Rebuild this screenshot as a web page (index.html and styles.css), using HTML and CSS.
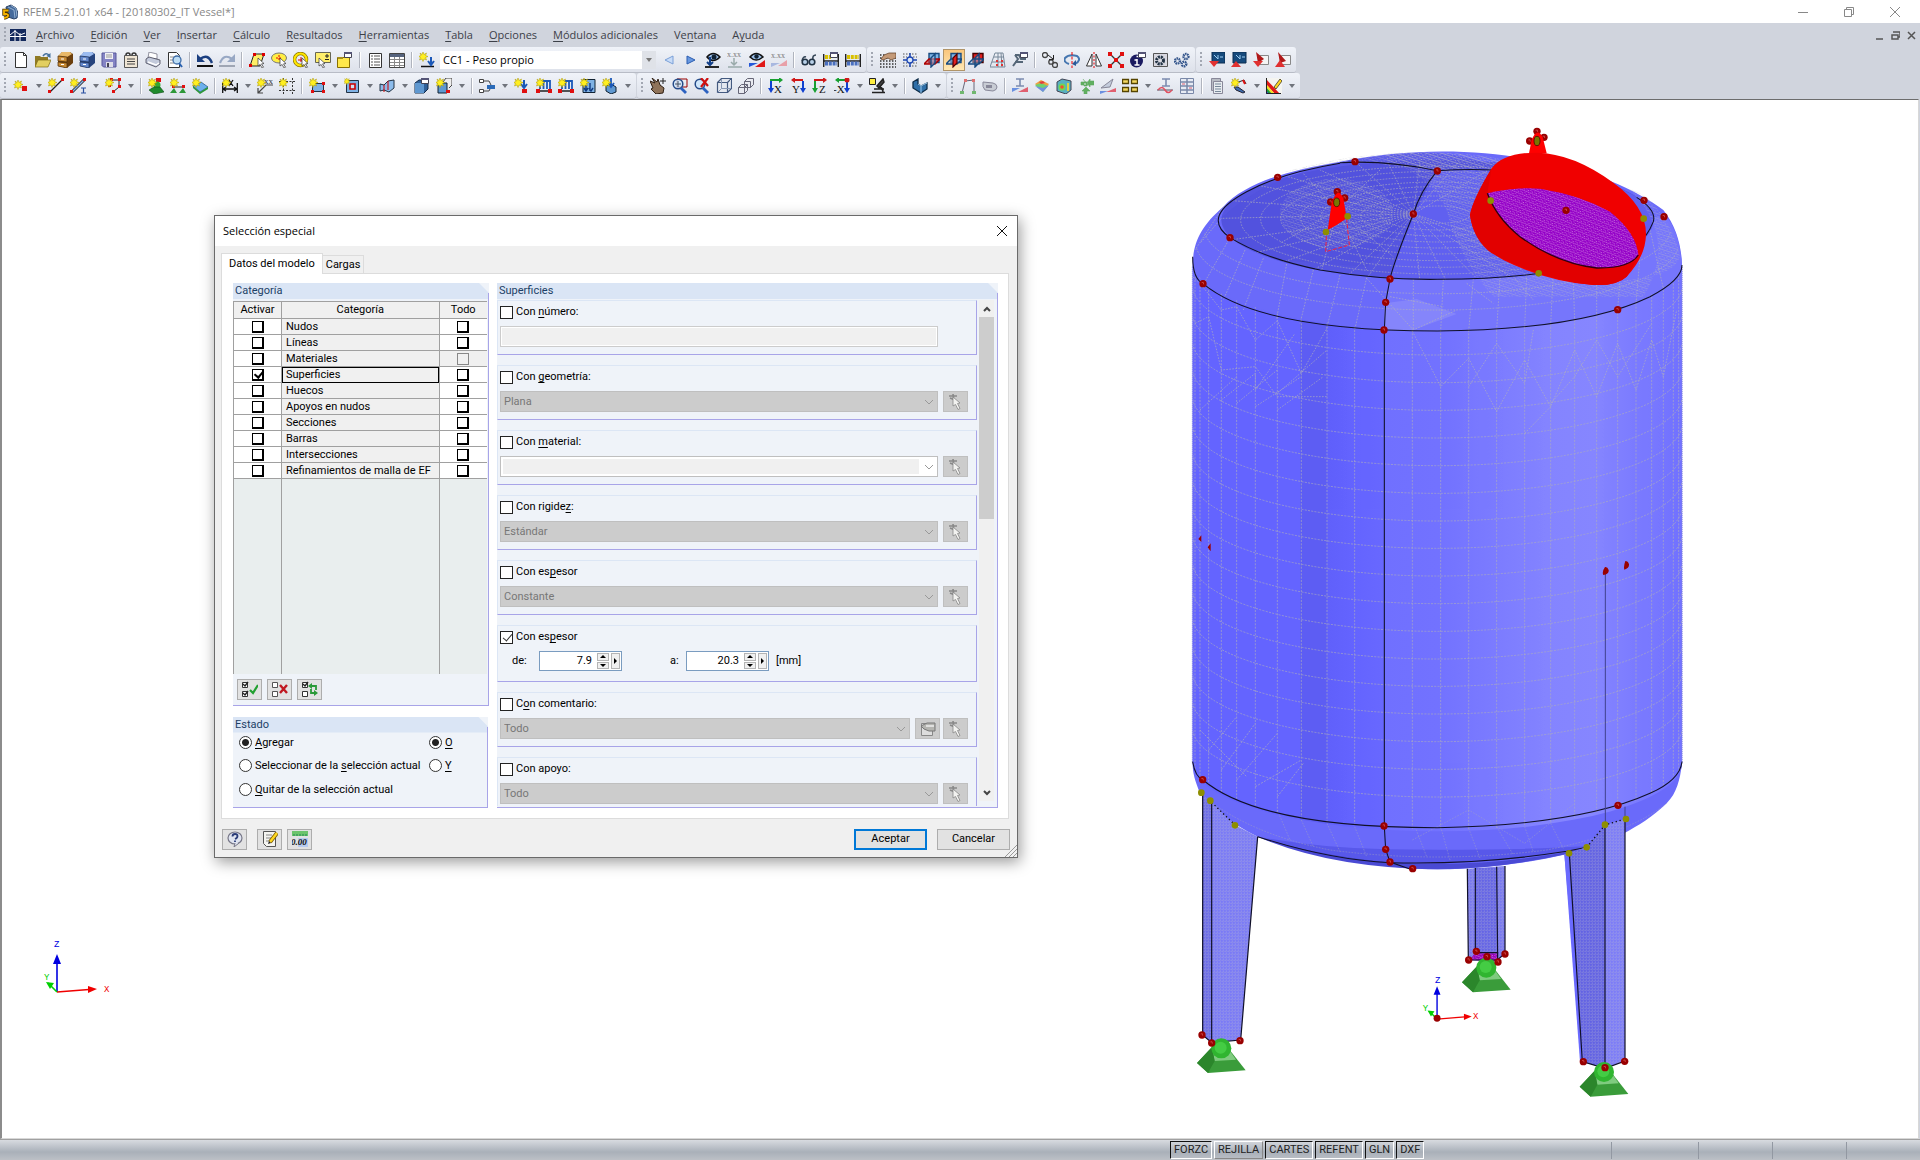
FILE: index.html
```html
<!DOCTYPE html>
<html lang="es">
<head>
<meta charset="utf-8">
<title>RFEM 5.21.01 x64</title>
<link rel="stylesheet" href="styles.css">
</head>
<body>
<svg class="defs" aria-hidden="true">
<defs>
<linearGradient id="g-shell" x1="0" x2="1"><stop offset="0" stop-color="#6464ff"/><stop offset=".22" stop-color="#6464ff"/><stop offset=".22" stop-color="#5d5df3"/><stop offset=".274" stop-color="#5d5df3"/><stop offset=".274" stop-color="#6060fb"/><stop offset=".332" stop-color="#6464ff"/><stop offset=".391" stop-color="#6868ff"/><stop offset=".391" stop-color="#7070ff"/><stop offset=".5" stop-color="#7272ff"/><stop offset=".6" stop-color="#7a7aff"/><stop offset=".72" stop-color="#8484ff"/><stop offset=".82" stop-color="#8686ff"/><stop offset=".9" stop-color="#7c7cff"/><stop offset="1" stop-color="#7272ff"/></linearGradient>
<pattern id="p-mesh" width="9" height="9" patternUnits="userSpaceOnUse"><path d="M0 4H9M4 0V9" stroke="#c0c0cc" stroke-width="1.6" stroke-dasharray="4 3" fill="none"/></pattern>
<pattern id="p-fine" width="14" height="14" patternUnits="userSpaceOnUse" patternTransform="rotate(18)"><path d="M0 7H14M7 0L0 14M7 0L14 14" stroke="#c0c0c4" stroke-width="1.8" stroke-dasharray="3 3" fill="none"/></pattern>
<pattern id="p-pink" width="13" height="13" patternUnits="userSpaceOnUse" patternTransform="rotate(22)"><path d="M0 6H13M6 0L0 13M6 0L13 13" stroke="#d890e4" stroke-width="1.600" stroke-dasharray="3 3" fill="none"/></pattern>
<clipPath id="c-shell"><path d="M38 462A735 210 0 0 0 1506 462V1960A735 210 0 0 1 38 1960Z"/></clipPath>
<clipPath id="c-dome"><ellipse cx="772" cy="330" rx="648" ry="180"/></clipPath>
<g id="node"><circle r="11" fill="#900"/><path d="M-4-3l5-1 1 6" stroke="#c84040" stroke-width="3" fill="none"/></g>
<circle id="mid" r="10" fill="#8e8e00"/>
<g id="support"><path d="M-73 58L-28 10H18L73 80L-40 88Z" fill="#3a9c3a"/><path d="M-28 10H18L44 48L-20 52Z" fill="#7fcb7f"/><path d="M-28 10L-20 52L-40 88L-73 58Z" fill="#2b862b"/><circle cy="14" r="30" fill="#30b530"/><circle cx="-2" cy="12" r="18" fill="#44cc44"/></g>
<g id="triad" fill="none" stroke-width="1.6"><path d="M22 52V20" stroke="#0000e0"/><path d="M22 14l4 10h-8z" fill="#0000e0"/><path d="M22 52L54 49.500" stroke="#f00000"/><path d="M62 49l-9 4v-7z" fill="#f00000"/><path d="M22 52l-9-9" stroke="#00d000"/><path d="M11 42l8 1-4 6z" fill="#00d000"/></g>

<path id="star" d="M4 0l1 2.500 2.500-1.500-1 2.500 2.500 1-2.500 1 1 2.500L5 7 4 9.500 3 7 .5 8l1-2.500L-.5 4.500l2.500-1L1 1l2 1.500z" fill="#ffef20" stroke="#a89400" stroke-width=".5"/>
<g id="win"><path d="M.5.5h7v5h-7z" fill="#fff" stroke="#445"/><path d="M0 0h8v2H0z" fill="#557"/></g>
<path id="cursor" d="M0 0l6 5.500-2.500.4 2 3.300-1.400.8-2-3.500L0 8z" fill="#fff" stroke="#333" stroke-width=".7"/>

<symbol id="app" viewBox="0 0 16 16"><path d="M4 3l5-2 5 3 2 5-1 5-3 1-6-2z" fill="#456a9c" stroke="#2c4468"/><path d="M6 3l6 3 1 8M9 1.500l5 3 1 8" stroke="#a8c4e0" fill="none" stroke-width=".8"/><path d="M6.500 6.500H2V10H4.500q2 .5 1.500 2T2 14" stroke="#4a3400" stroke-width="3.400" fill="none"/><path d="M6.500 6.500H2V10H4.500q2 .5 1.500 2T2 14" stroke="#f5b400" stroke-width="1.800" fill="none"/></symbol>
<symbol id="bridge" viewBox="0 0 16 12"><path d="M0 0h16v12H0z" fill="#13295c"/><path d="M0 7.500h16M5 1v11M10 4v8M0 6L5 2l5 4 5-2" stroke="#fff" fill="none"/></symbol>
<symbol id="new" viewBox="0 0 16 16"><path d="M2.500.5h8l3 3v12h-11z" fill="#fff" stroke="#333"/><path d="M10.500.5v3h3" fill="none" stroke="#333"/></symbol>
<symbol id="open" viewBox="0 0 16 16"><path d="M0 4h5l1 1h7v10H0z" fill="#8f7a24"/><path d="M3 8h13l-3 7H0z" fill="#e2cf60" stroke="#7d6a16" stroke-width=".7"/><path d="M8 4q3-4 6-1" stroke="#46729e" stroke-width="1.600" fill="none"/><path d="M15.500 1v5l-4-2z" fill="#46729e"/></symbol>
<symbol id="cab-o" viewBox="0 0 16 16"><path d="M5 0h8l3 2v9l-6 5-9-2V5z" fill="#6b3f0e"/><path d="M5 0h8l2 2-5 3-9-1z" fill="#e8b868"/><path d="M1 4l9 1v5l-9-1zM1 10l9 1v5l-9-2z" fill="#c98b34" stroke="#4a2c08" stroke-width=".7"/><path d="M4 7h3M4 12.500h3" stroke="#fff"/></symbol>
<symbol id="cab-b" viewBox="0 0 16 16"><path d="M5 0h8l3 2v9l-6 5-9-2V5z" fill="#27447e"/><path d="M5 0h8l2 2-5 3-9-1z" fill="#9cbcf0"/><path d="M1 4l9 1v5l-9-1zM1 10l9 1v5l-9-2z" fill="#6488cc" stroke="#1c3058" stroke-width=".7"/><path d="M4 7h3M4 12.500h3" stroke="#fff"/></symbol>
<symbol id="save" viewBox="0 0 16 16"><path d="M1 1h14v14H2.500L1 13.500z" fill="#8484c4" stroke="#56569a"/><path d="M4 1h8v6H4z" fill="#f0f0f4"/><path d="M5 3h6M5 5h6" stroke="#999"/><path d="M5 10h7v5H5z" fill="#dedee8"/><path d="M6 11h2v4H6z" fill="#445"/></symbol>
<symbol id="clip" viewBox="0 0 16 16"><path d="M1.500 3.500h13v12h-13z" fill="#efe5d4" stroke="#555"/><path d="M3 3q0-2 2-2t2 2M9 3q0-2 2-2t2 2" stroke="#333" stroke-width="1.500" fill="none"/><path d="M4 7h8M4 9.500h8M4 12h8" stroke="#444"/></symbol>
<symbol id="print" viewBox="0 0 16 16"><path d="M4 0l8 2v5L3 6z" fill="#fff" stroke="#667" stroke-width=".7"/><path d="M1 7l3-2 11 3v4l-4 3-10-4z" fill="#c3cadb" stroke="#445" stroke-width=".8"/><path d="M3 10l8 3 3-2" stroke="#fff" stroke-width="1.500" fill="none"/></symbol>
<symbol id="preview" viewBox="0 0 16 16"><path d="M1.500.5h8l3 3v12h-11z" fill="#fff" stroke="#333"/><path d="M3 5h6M3 8h4M3 11h4" stroke="#888"/><circle cx="10" cy="8" r="4" fill="#bcdcf4" stroke="#3f6da8" stroke-width="1.300"/><path d="M12 11l3 4" stroke="#2a62b0" stroke-width="2"/></symbol>
<symbol id="undo" viewBox="0 0 16 16"><path d="M0 14h16" stroke="#111" stroke-width="2"/><path d="M3 7q8-6 12 4" stroke="#1b3f80" stroke-width="2.500" fill="none"/><path d="M0 2v8h8z" fill="#1b3f80"/></symbol>
<symbol id="redo" viewBox="0 0 16 16"><path d="M0 14h16" stroke="#8890a0" stroke-width="1.500"/><path d="M13 7Q5 1 1 11" stroke="#98a8c4" stroke-width="2.200" fill="none"/><path d="M16 2v8H8z" fill="#98a8c4"/></symbol>
<symbol id="sel-r" viewBox="0 0 16 16"><path d="M5 2h10l-4 12H1z" fill="#ffee66" stroke="#222"/><path d="M4 1h3v3H4zM13 1h3v3h-3zM0 12h3v3H0z" fill="#d00"/><use href="#cursor" x="9" y="6"/></symbol>
<symbol id="sel-e" viewBox="0 0 16 16"><ellipse cx="8" cy="6" rx="7.500" ry="5" fill="#ffee44" stroke="#777"/><path d="M8 3v6M5 6h6" stroke="#e00" stroke-dasharray="2 1"/><use href="#cursor" x="9" y="6"/></symbol>
<symbol id="sel-c" viewBox="0 0 16 16"><circle cx="7.500" cy="7.500" r="6" fill="none" stroke="#8a7600" stroke-width="3.500"/><circle cx="7.500" cy="7.500" r="6" fill="none" stroke="#ffe600" stroke-width="2.200"/><path d="M8 5v5M5 8h6" stroke="#d00"/><use href="#cursor" x="9" y="6"/></symbol>
<symbol id="sel-pm" viewBox="0 0 16 16"><path d="M.5.5h15v10H.5z" fill="#ffef6c" stroke="#665"/><path d="M10 4h4M12 2v4M10 7.500h4" stroke="#222"/><use href="#cursor" x="4" y="6"/></symbol>
<symbol id="sel-w" viewBox="0 0 16 16"><path d="M.5 5.500h12v10H.5z" fill="#ffe84a" stroke="#886f00"/><path d="M1 5h5v2H1z" fill="#a89020"/><use href="#win" x="7" y="0"/></symbol>
<symbol id="list" viewBox="0 0 16 16"><path d="M2.500 1.500h12v14h-12z" fill="#fff" stroke="#333"/><path d="M7 4h6M7 7h6M7 10h6M7 13h6M4 4h2M4 7h2M4 10h2M4 13h2" stroke="#555"/></symbol>
<symbol id="grid" viewBox="0 0 16 16"><path d="M.5 1.500h15v14H.5z" fill="#fff" stroke="#444"/><path d="M1 2h14v3H1z" fill="#56647e"/><path d="M1 7.500h14M1 10.500h14M1 13.500h14M5.500 5v10M10.500 5v10" stroke="#888"/></symbol>
<symbol id="newload" viewBox="0 0 16 16"><use href="#star"/><path d="M2 14.500h13" stroke="#111" stroke-width="1.500"/><path d="M12 5v8M9 9l3 4 3-4" stroke="#1b58b8" stroke-width="2" fill="none"/></symbol>
<symbol id="prev" viewBox="0 0 16 16"><path d="M12 4v8L4 8z" fill="#c8dcf8" stroke="#7aa0d8"/></symbol>
<symbol id="next" viewBox="0 0 16 16"><path d="M4 4v8l8-4z" fill="#6898e0" stroke="#2a5cb0"/></symbol>
<symbol id="eye1" viewBox="0 0 16 16"><path d="M2 5q6-7 13 0-7 7-13 0z" fill="#9cc0ea" stroke="#111" stroke-width="1.500"/><circle cx="9" cy="5" r="2.500" fill="#123"/><path d="M5 5v8M2 10l3 3 3-3" stroke="#123f88" stroke-width="2" fill="none"/><path d="M0 15h14" stroke="#111" stroke-width="1.800"/></symbol>
<symbol id="xxx1" viewBox="0 0 16 16"><text x="0" y="5" font-size="8" fill="#777">x.xx</text><path d="M7 6v7M4 10l3 3 3-3M1 15h14" stroke="#9aa" stroke-width="1.500" fill="none"/></symbol>
<symbol id="eye2" viewBox="0 0 16 16"><path d="M1 5q6-7 13 0-7 6-13 0z" fill="#9cc0ea" stroke="#111" stroke-width="1.500"/><circle cx="7.500" cy="4.500" r="2.200" fill="#123"/><path d="M0 11h9l-9 4z" fill="#2458d8"/><path d="M16 8v7H6z" fill="#e01818"/></symbol>
<symbol id="xxx2" viewBox="0 0 16 16"><text x="0" y="6" font-size="8" fill="#777">x.xx</text><path d="M0 11h9l-9 4z" fill="#a8b8e0"/><path d="M16 8v6H7z" fill="#e8a0a8"/></symbol>
<symbol id="glasses" viewBox="0 0 16 16"><path d="M1 9q1-5 4-4M15 3q-4 0-3 5" stroke="#345" stroke-width="1.500" fill="none"/><circle cx="4" cy="10" r="2.800" fill="#b8d0e8" stroke="#234" stroke-width="1.600"/><circle cx="11" cy="10" r="2.800" fill="#b8d0e8" stroke="#234" stroke-width="1.600"/></symbol>
<symbol id="abacus" viewBox="0 0 16 16"><path d="M.7 2v13M15.300 2v13M0 9h16" stroke="#222" stroke-width="1.400"/><path d="M2 5h12" stroke="#d8c000" stroke-width="4" stroke-dasharray="3 .8"/><path d="M2 11.500h12" stroke="#4a70c0" stroke-width="4" stroke-dasharray="3 .8"/></symbol>
<symbol id="abacus-w" viewBox="0 0 16 16"><path d="M.7 2v13M15.300 2v13M0 9h16" stroke="#222" stroke-width="1.400"/><path d="M2 5h6" stroke="#d8c000" stroke-width="4" stroke-dasharray="3 .8"/><path d="M2 11.500h12" stroke="#4a70c0" stroke-width="4" stroke-dasharray="3 .8"/><use href="#win" x="7" y="0"/></symbol>
<symbol id="handgrid" viewBox="0 0 16 16"><path d="M0 3h5M0 6h16M0 9h16M0 12h16M0 15h16" stroke="#333" stroke-dasharray="1.500 1.500" stroke-width="1.300"/><path d="M4 3l5-2h7v5l-5 2-3-2-5 2-2-1z" fill="#c49a78" stroke="#5c3a20" stroke-width=".7"/></symbol>
<symbol id="snap" viewBox="0 0 16 16"><path d="M1 2h14M1 14h14M1 5h4M11 5h4M1 11h4M11 11h4" stroke="#555" stroke-dasharray="1.500 1.500"/><circle cx="8" cy="8" r="3" fill="#dce8fa" stroke="#1a44b0" stroke-width="1.300"/><path d="M8 1v4M8 11v4M1 8h4M11 8h4" stroke="#1a44b0" stroke-width="1.500"/></symbol>
<symbol id="pl1" viewBox="0 0 16 16"><path d="M5 1.500h10v9H5z" fill="#7eb4e6" stroke="#174a80" stroke-width="1.400"/><path d="M0 12l5-5h11l-5 5z" fill="#e02020" fill-opacity=".6" stroke="#a00" stroke-width="1.400"/><path d="M7 6l4-4v9l-4 4z" fill="#9cc8f0" fill-opacity=".5" stroke="#174a80" stroke-width="1.400"/></symbol>
<symbol id="pl2" viewBox="0 0 16 16"><path d="M5 1.500h10v9H5z" fill="#7eb4e6" stroke="#174a80" stroke-width="1.400"/><path d="M0 12l5-5h11l-5 5z" fill="#9cc8f0" fill-opacity=".5" stroke="#174a80" stroke-width="1.400"/><path d="M7 6l4-4v9l-4 4z" fill="#e02020" stroke="#500" stroke-width="1.200"/></symbol>
<symbol id="pl3" viewBox="0 0 16 16"><path d="M5 1.500h10v9H5z" fill="#e02020" stroke="#400" stroke-width="1.400"/><path d="M0 12l5-5h11l-5 5zM7 6l4-4v9l-4 4z" fill="#9cc8f0" fill-opacity=".5" stroke="#174a80" stroke-width="1.400"/></symbol>
<symbol id="persp" viewBox="0 0 16 16"><path d="M5 1h8l2 14H0zM4 5h10M2 10h12M8 1v14M11 1l1 14" stroke="#789" fill="none"/><path d="M6 8h2v2H6zM11 8h2v2h-2zM6 12h2v2H6zM11 12h2v2h-2z" fill="#d33"/></symbol>
<symbol id="wrench" viewBox="0 0 16 16"><path d="M1 14l5-7-3-4M3 3h4l2 4h5M3 10h8" stroke="#567" stroke-width="2" fill="none"/><use href="#win" x="8" y="0"/></symbol>
<symbol id="move" viewBox="0 0 16 16"><circle cx="3" cy="3" r="2.500" fill="none" stroke="#444" stroke-width="1.300"/><circle cx="9" cy="10" r="2.200" fill="none" stroke="#444" stroke-width="1.300"/><circle cx="13" cy="13" r="2.500" fill="none" stroke="#444" stroke-width="1.300"/><path d="M6 3l5 4M11.500 3v4.500H7" stroke="#222" fill="none"/></symbol>
<symbol id="rotate" viewBox="0 0 16 16"><path d="M5 12Q-1 10 1 6q4-4 12-2 5 4-2 8" stroke="#4576b0" stroke-width="2" fill="none"/><path d="M12 8v6l-4-2z" fill="#2a5a98"/><path d="M8 0v16" stroke="#e00" stroke-dasharray="3 1.500"/></symbol>
<symbol id="mirror" viewBox="0 0 16 16"><path d="M6 2v12H.5zM10 2v12h5.500z" fill="#fff" stroke="#333"/><path d="M8 0v16" stroke="#e00" stroke-dasharray="2 1.500"/></symbol>
<symbol id="cross" viewBox="0 0 16 16"><path d="M2 2l12 12M14 2L2 14" stroke="#333" stroke-width="1.400"/><path d="M0 0h4v4H0zM12 0h4v4h-4zM0 12h4v4H0zM12 12h4v4h-4zM6 6h4v4H6z" fill="#e01010"/></symbol>
<symbol id="info" viewBox="0 0 16 16"><circle cx="6.500" cy="9" r="6.500" fill="#1a1a60"/><path d="M7 7v6M4.500 8h2M4.500 13h5M6.500 4.500h1.500" stroke="#fff" stroke-width="1.500"/><use href="#win" x="8" y="0"/></symbol>
<symbol id="gearbox" viewBox="0 0 16 16"><path d="M1.500 1.500h14v13h-14z" fill="#d8d8e0" stroke="#555"/><circle cx="8" cy="8.500" r="3.500" fill="none" stroke="#234" stroke-width="3" stroke-dasharray="2 .8"/></symbol>
<symbol id="gears" viewBox="0 0 16 16"><g fill="none" stroke="#35568c" stroke-width="2.400" stroke-dasharray="1.500 .6"><circle cx="3.500" cy="9" r="2.500"/><circle cx="12" cy="4.500" r="2.500"/><circle cx="10" cy="12" r="2.300"/></g></symbol>
<symbol id="m1" viewBox="0 0 16 16"><path d="M3 0h13v11H3z" fill="#164a7c" stroke="#0b2d50"/><path d="M5 3l4 4M9 3v4M11 5h3" stroke="#9fd0f4"/><path d="M0 9h10l-5 6z" fill="#e03030"/></symbol>
<symbol id="m2" viewBox="0 0 16 16"><path d="M2 0h13v11H2z" fill="#164a7c" stroke="#0b2d50"/><path d="M5 3l4 4M9 3v4M11 5h3" stroke="#9fd0f4"/><path d="M0 15h10L5 9z" fill="#e03030"/></symbol>
<symbol id="m3" viewBox="0 0 16 16"><path d="M6.500 3.500h9v9h-9z" fill="#f4f4f4" stroke="#888"/><path d="M3 0l8 7-6 4z" fill="#b01818"/><path d="M0 9h10l-5 6z" fill="#e03030"/></symbol>
<symbol id="m4" viewBox="0 0 16 16"><path d="M6.500 3.500h9v9h-9z" fill="#f4f4f4" stroke="#888"/><path d="M3 0l8 9-6 2z" fill="#b01818"/><path d="M0 15h10L5 8z" fill="#e03030"/></symbol>

<symbol id="node-n" viewBox="0 0 16 16"><use href="#star" x="1" y="2"/><path d="M9 8h5v5H9z" fill="#e01010"/></symbol>
<symbol id="line-n" viewBox="0 0 16 16"><path d="M2 14L14 2" stroke="#222" stroke-width="1.300"/><path d="M0 12h3v3H0zM13 0h3v3h-3z" fill="#e01010"/><use href="#star"/></symbol>
<symbol id="member-n" viewBox="0 0 16 16"><path d="M2 14L14 2" stroke="#222" stroke-width="3"/><path d="M2 14L14 2" stroke="#8ab4e8" stroke-width="1.500"/><path d="M0 12h3v3H0zM13 0h3v3h-3z" fill="#e01010"/><path d="M11 10h5M11 15h5M13.500 10v5" stroke="#2a50a0" stroke-width="1.200"/><use href="#star"/></symbol>
<symbol id="poly-n" viewBox="0 0 16 16"><path d="M6 2h8v7l-6 5" stroke="#222" fill="none"/><path d="M5 0h3v3H5zM13 0h3v3h-3zM13 7h3v3h-3zM7 12h3v3H7zM3 6h3v3H3z" fill="#e01010"/><use href="#star"/></symbol>
<symbol id="sup-n" viewBox="0 0 16 16"><path d="M8 0h5v4H8z" fill="#e01010"/><circle cx="9" cy="7" r="3.500" fill="#3a3"/><path d="M6 9h6l4 5-10 2-5-4z" fill="#1f8a2c" stroke="#0c4c14" stroke-width=".6"/><use href="#star"/></symbol>
<symbol id="sups-n" viewBox="0 0 16 16"><path d="M3 9h11" stroke="#222"/><path d="M2 7h3v3H2zM12 7h3v3h-3z" fill="#e01010"/><path d="M4 10l3 5H0zM13 10l3 5H9z" fill="#2c9838"/><use href="#star"/></symbol>
<symbol id="surfsup-n" viewBox="0 0 16 16"><path d="M1 8l8-4 7 5-8 5z" fill="#6cb0ec" stroke="#1c5080" stroke-width=".7"/><path d="M1 8l7 6 8-5v2l-8 5-7-6z" fill="#2c9838"/><use href="#star"/></symbol>
<symbol id="dim-n" viewBox="0 0 16 16"><path d="M.7 5v10M15.300 5v10M1 11h14M4 9l-3 2 3 2M12 9l3 2-3 2M7 2l4 6M11 2L7 8" stroke="#111" fill="none" stroke-width="1.300"/><use href="#star"/></symbol>
<symbol id="note-n" viewBox="0 0 16 16"><text x="7" y="6" font-size="9" fill="#333">xx</text><path d="M16 7H9l-8 8M1 10v5h5" stroke="#444" fill="none" stroke-width="1.200"/><use href="#star"/></symbol>
<symbol id="guide-n" viewBox="0 0 16 16"><path d="M4.500 0v16M13.500 0v16M0 3.500h16M0 12.500h16" stroke="#333" stroke-dasharray="2 1.500"/><use href="#star"/></symbol>
<symbol id="surf-n" viewBox="0 0 16 16"><path d="M3.500 5.500h11v8h-11z" fill="#7fb2e4" stroke="#234"/><path d="M2 12h3v3H2zM13 12h3v3h-3zM13 4h3v3h-3z" fill="#e01010"/><use href="#star"/></symbol>
<symbol id="opening-n" viewBox="0 0 16 16"><path d="M2.500 2.500h12v12h-12z" fill="#7fb2e4" stroke="#234"/><path d="M6 6h5v5H6z" fill="#cfe0f4" stroke="#c00" stroke-width="1.600"/><use href="#star" transform="scale(.7)"/></symbol>
<symbol id="fold" viewBox="0 0 16 16"><path d="M1 6l4 1 4-4 6-1v8l-5 4-5-2-4 1z" fill="#8cbcec" stroke="#234"/><path d="M5 7v7M9 3v9" stroke="#c00"/></symbol>
<symbol id="solid" viewBox="0 0 16 16"><path d="M1 5l4-3h9v9l-4 4H1z" fill="#2f6098" stroke="#122a48"/><path d="M1 5h9v10H1z" fill="#5f98d0"/><use href="#win" x="7" y="0"/></symbol>
<symbol id="extr-n" viewBox="0 0 16 16"><path d="M7 4l3-4h6v7l-3 3" fill="#eee" stroke="#444"/><path d="M2 5h9v10H2z" fill="#5f98d0" stroke="#123"/><path d="M10 12h4v3h-4z" fill="#e01010"/><use href="#star"/></symbol>
<symbol id="tree" viewBox="0 0 16 16"><path d="M.5 1.500h4v3h-4zM.5 11.500h4v3h-4z" fill="#fff" stroke="#444"/><path d="M5 3h5l2 4M5 13h5l2-4" stroke="#444" fill="none"/><path d="M8 7h8v4H8z" fill="#2a6ab8"/></symbol>
<symbol id="nload" viewBox="0 0 16 16"><path d="M10 2v7M7 6l3 4 3-4" stroke="#1b58b8" stroke-width="2" fill="none"/><path d="M8 11h5v4H8z" fill="#e01010"/><use href="#star"/></symbol>
<symbol id="lload" viewBox="0 0 16 16"><path d="M3 3h11v8M4 3v8M7.500 3v8M11 3v8" stroke="#1b58b8" stroke-width="1.800" fill="none"/><path d="M1 13h14" stroke="#222" stroke-width="1.500"/><path d="M0 11h4v4H0zM12 11h4v4h-4z" fill="#e01010"/><use href="#star"/></symbol>
<symbol id="sload" viewBox="0 0 16 16"><path d="M3 1.500h12v13H3z" fill="#7fb2e4" stroke="#123"/><path d="M6 5v8M10 5v8M4 10l2 3 2-3M9 10l2 3 2-3" stroke="#113a80" fill="none" stroke-width="1.400"/><use href="#star"/></symbol>
<symbol id="vload" viewBox="0 0 16 16"><path d="M4 8l5-2 5 3v5l-5 2-5-3z" fill="#5f98d0" stroke="#123"/><path d="M9 0v8M6 5l3 4 3-4" stroke="#1b58b8" stroke-width="1.800" fill="none"/><use href="#star"/></symbol>
<symbol id="hand" viewBox="0 0 16 16"><path d="M0 3l5 2-3-5 5 4 1-3 2 6 4 3-1 5-7 1-5-5 2-1z" fill="#8f735a" stroke="#2f2014"/><path d="M13 0v6M10 3h6" stroke="#222"/></symbol>
<symbol id="zoomr" viewBox="0 0 16 16"><path d="M5 1h10v8H5z" fill="none" stroke="#900"/><circle cx="6" cy="6" r="4.800" fill="#cfe6fa" fill-opacity=".8" stroke="#244a88" stroke-width="1.500"/><path d="M6 3v6M3 6h6" stroke="#456"/><path d="M9 10l5 5" stroke="#2c62c0" stroke-width="2.800"/></symbol>
<symbol id="zoomx" viewBox="0 0 16 16"><circle cx="6" cy="6" r="4.800" fill="#cfe6fa" stroke="#244a88" stroke-width="1.500"/><path d="M9 10l5 5" stroke="#2c62c0" stroke-width="2.800"/><path d="M7 0l7 8M14 0L7 9" stroke="#d01010" stroke-width="2.200"/></symbol>
<symbol id="cube" viewBox="0 0 16 16"><path d="M1.500 4.500h10v10h-10zM1.500 4.500l4-4h10l-4 4M15.500.5v10l-4 4" fill="#e4e8f0" stroke="#445a80" stroke-width="1.200"/><path d="M5.500 1v9.500H15M5.500 10.500l-4 4" fill="none" stroke="#8898b4"/></symbol>
<symbol id="cubes" viewBox="0 0 16 16"><path d="M6.500 3.500l3-3h6v6l-3 3h-6zM.5 9.500l3-3h6v6l-3 3h-6z" fill="#e8eaf0" stroke="#667"/><path d="M.5 9.500h6v6M6.500 9.500l3-3M6.500 3.500h6v6l3-3" fill="none" stroke="#667"/></symbol>
<symbol id="vx" viewBox="0 0 16 16"><path d="M3 3v9" stroke="#1040d0" stroke-width="2"/><path d="M0 10h6l-3 5z" fill="#1040d0"/><path d="M2 2h10" stroke="#18a030" stroke-width="2"/><path d="M11-1v6l4-3z" fill="#18a030"/><text x="6" y="15" font-size="11" fill="#111">X</text></symbol>
<symbol id="vy" viewBox="0 0 16 16"><path d="M13 3v9" stroke="#1040d0" stroke-width="2"/><path d="M10 10h6l-3 5z" fill="#1040d0"/><path d="M13 2H4" stroke="#d01818" stroke-width="2"/><path d="M5-1v6L1 2z" fill="#d01818"/><text x="2" y="15" font-size="11" fill="#111">Y</text></symbol>
<symbol id="vz" viewBox="0 0 16 16"><path d="M3 3v9" stroke="#18a030" stroke-width="2"/><path d="M0 10h6l-3 5z" fill="#18a030"/><path d="M2 2h10" stroke="#d01818" stroke-width="2"/><path d="M11-1v6l4-3z" fill="#d01818"/><text x="7" y="15" font-size="11" fill="#111">Z</text></symbol>
<symbol id="vmx" viewBox="0 0 16 16"><path d="M13 3v9" stroke="#1040d0" stroke-width="2"/><path d="M10 10h6l-3 5z" fill="#1040d0"/><path d="M13 2H4" stroke="#18a030" stroke-width="2"/><path d="M5-1v6L1 2z" fill="#18a030"/><circle cx="13" cy="2" r="2.500" fill="#d01818"/><text x="-1" y="15" font-size="11" fill="#111">-X</text></symbol>
<symbol id="scope" viewBox="0 0 16 16"><path d="M.5.5h6v6h-6z" fill="#ffee40" stroke="#222"/><path d="M14 1L8 8l2 2 5-6zM5 11h10M3 14.500h13M10 9q4 0 4 5" fill="#444" stroke="#222" stroke-width="1.500"/></symbol>
<symbol id="blue3d" viewBox="0 0 16 16"><path d="M1 4l5-3v5l3 2 6-3v6l-6 4-8-5z" fill="#2f6fa8" stroke="#0d2c48" stroke-width="1.300"/><path d="M6 6l3 2 6-3M9 8v7" stroke="#9cccf0" fill="none"/></symbol>
<symbol id="frame" viewBox="0 0 16 16"><path d="M2 15L5 3l9-1v12" stroke="#667" fill="none"/><path d="M4 1h3v3H4zM12 1h3v3h-3z" fill="#e07070"/><path d="M0 13h4v3H0zM12 13h4v3h-4z" fill="#70b870"/></symbol>
<symbol id="cyl" viewBox="0 0 16 16"><path d="M1 4l10 1q4 1 4 4t-4 4l-8-1q-3-3-2-8z" fill="#c8ccd4" stroke="#889"/><path d="M4 7h6v3H4z" fill="#889"/></symbol>
<symbol id="beam1" viewBox="0 0 16 16"><path d="M4 1h8M4 8h8M8 1v7" stroke="#7c8cb0" stroke-width="1.600"/><path d="M0 10h8l-8 4z" fill="#6a90e0"/><path d="M16 9v5H6z" fill="#e06070"/></symbol>
<symbol id="iso" viewBox="0 0 16 16"><path d="M1 6l6-4 8 4-6 7z" fill="#f0a040"/><path d="M1 7l6-2 7 3-5 6z" fill="#70d070"/><path d="M1 8l8 2 6-3-6 7z" fill="#7090e0"/><path d="M5 4l4-1 2 2-4 1z" fill="#e04040"/></symbol>
<symbol id="isocube" viewBox="0 0 16 16"><path d="M1 4l5-3 9 2v9l-5 4-9-3z" fill="#58b0c0" stroke="#445"/><circle cx="6" cy="9" r="3.500" fill="#70d850"/><circle cx="6" cy="9" r="1.800" fill="#f05030"/><path d="M12 5v8" stroke="#e0d040" stroke-width="2"/></symbol>
<symbol id="reac" viewBox="0 0 16 16"><path d="M5 1l3 4H6v3h3l1-2V4l-3 0M3 4h5v3H3zM9 5l3-4v2h4v4h-4v2zM6 16v-3H4l4-4 4 4h-3v3z" fill="#60b060" stroke="#60a860" stroke-width=".6"/></symbol>
<symbol id="defl" viewBox="0 0 16 16"><path d="M1 10L13 1l-3 8z" fill="#c4ccdc" stroke="#889"/><path d="M0 13h8l-8 3z" fill="#6a90e0"/><path d="M16 10v4H6z" fill="#e06070"/></symbol>
<symbol id="tiles" viewBox="0 0 16 16"><path d="M.5 1.500h6v4h-6zM9.500 1.500h6v4h-6zM.5 9.500h6v4h-6zM9.500 9.500h6v4h-6z" fill="#f4d860" stroke="#554400" stroke-width="1.300"/></symbol>
<symbol id="beam2" viewBox="0 0 16 16"><path d="M5 1h8M5 8h8M9 1v7" stroke="#7c8cb0" stroke-width="1.600"/><path d="M0 12h16" stroke="#556"/><path d="M1 12q4-5 7 0t7 0" fill="none" stroke="#e05060" stroke-width="1.500"/></symbol>
<symbol id="table2" viewBox="0 0 16 16"><path d="M1.500.5h13v15h-13z" fill="#e8ecf4" stroke="#7a88a8"/><path d="M1 4h14M1 8h14M1 12h14M8 0v16" stroke="#7a88a8" stroke-width="1.500"/><path d="M3 6h3M10 10h3" stroke="#e06070"/></symbol>
<symbol id="report" viewBox="0 0 16 16"><path d="M2.500.5h9v12h-9z" fill="#b8bcc4" stroke="#889"/><path d="M4.500 3.500h9v12h-9z" fill="#e8ecf0" stroke="#889"/><path d="M6 6h6M6 8.500h6M6 11h6M6 13.500h6" stroke="#789"/></symbol>
<symbol id="tools-n" viewBox="0 0 16 16"><path d="M5 5l8-3 2 4" stroke="#222" fill="none"/><path d="M3 9l4 0 7 5-2 1-7-3z" fill="#3c6cae" stroke="#223"/><path d="M12 2l2 4" stroke="#e01010" stroke-width="2"/><use href="#star"/></symbol>
<symbol id="rainbow" viewBox="0 0 16 16"><path d="M0 0h16v16H0z" fill="#f4f4f0"/><path d="M0 1l14 15H9L0 6z" fill="#e01818"/><path d="M0 6l9 10H6L0 9z" fill="#f8e020"/><path d="M0 9l6 7H3l-3-3z" fill="#20a030"/><path d="M0 12l3 4H0z" fill="#2040e0"/><path d="M8 9l6-8 2 2-6 8z" fill="#ffd820" stroke="#222" stroke-width=".7"/><path d="M.5 0v15.500H15" fill="none" stroke="#222"/></symbol>

<symbol id="pick" viewBox="0 0 16 16"><path d="M1 2h8M5 0l1 8M2 4l5 2" stroke="#888" stroke-width="1.600"/><path d="M5 3l7 6-2.500.5 2.500 5-2 1-2.500-5L5 12z" fill="#f2f2f0" stroke="#888" stroke-width=".8"/></symbol>
<symbol id="handbook" viewBox="0 0 16 16"><path d="M1.500 2.500h11v12h-11z" fill="#ddd" stroke="#888"/><path d="M1 5l6-3h8v8H9L4 8z" fill="#b4b4b0" stroke="#777"/><path d="M6 5h8" stroke="#eee" stroke-width="1.500"/></symbol>
<symbol id="chk-all" viewBox="0 0 16 16"><path d="M.5 1.500h5v5h-5zM.5 10.500h5v5h-5z" fill="#fff" stroke="#333"/><path d="M1 3l2 2 3-4M1 12l2 2 3-4" stroke="#222" fill="none" stroke-width="1.400"/><path d="M8 9l3 3 5-8" stroke="#22a030" stroke-width="2.200" fill="none"/></symbol>
<symbol id="chk-none" viewBox="0 0 16 16"><path d="M.5 1.500h5v5h-5zM.5 10.500h5v5h-5z" fill="#fff" stroke="#555"/><path d="M8 4l7 8M15 4l-7 8" stroke="#c01820" stroke-width="2.400"/></symbol>
<symbol id="chk-inv" viewBox="0 0 16 16"><path d="M.5 1.500h5v5h-5zM.5 10.500h5v5h-5z" fill="#fff" stroke="#333"/><path d="M1 3l2 2 3-4" stroke="#222" fill="none" stroke-width="1.400"/><path d="M9 5h5v4M14 12H9V8" stroke="#2a9a38" stroke-width="1.800" fill="none"/><path d="M10 2v6L6 5zM12 9v6l4-3z" fill="#2a9a38"/></symbol>
<symbol id="help" viewBox="0 0 16 16"><ellipse cx="8" cy="7" rx="7" ry="6" fill="#dfe4f0" stroke="#778" stroke-width="1.200"/><path d="M8 12l-1 4 5-4" fill="#dfe4f0" stroke="#778"/><path d="M5.500 5.500q0-2.500 2.500-2.500t2.500 2-2.500 3M8 9.500v1.500" stroke="#2a3c78" stroke-width="1.800" fill="none"/></symbol>
<symbol id="edit" viewBox="0 0 16 16"><path d="M1.500.5h12v15h-9l-3-3z" fill="#f4f4f0" stroke="#555"/><path d="M4 4h6M4 7h5M4 10h3" stroke="#888"/><path d="M15 2l-7 9" stroke="#7a5a00" stroke-width="4"/><path d="M15 2l-7 9" stroke="#ffd820" stroke-width="2.400"/><path d="M6 13l1-3 2 2z" fill="#222"/></symbol>
<symbol id="units" viewBox="0 0 16 16"><path d="M0 0h16v5H0z" fill="#6cc46c"/><path d="M2 3v2M5 3v2M8 3v2M11 3v2M14 3v2" stroke="#285"/><path d="M6 7h10v9H6z" fill="#b8ccf0"/><text x="-1" y="14" font-size="9" font-style="italic" font-weight="bold" fill="#111">0.00</text></symbol>
</defs>
</svg>

<header class="titlebar">
  <svg class="i16"><use href="#app"/></svg>
  <h1>RFEM 5.21.01 x64 - [20180302_IT Vessel*]</h1>
  <div class="winbtns">
    <button aria-label="Minimizar"><svg viewBox="0 0 10 10"><path d="M0 5.500h10"/></svg></button>
    <button aria-label="Restaurar"><svg viewBox="0 0 10 10"><path d="M.5 2.500h7v7h-7zM2.500 2V.5h7v7H8"/></svg></button>
    <button aria-label="Cerrar"><svg viewBox="0 0 10 10"><path d="M0 0l10 10M10 0L0 10"/></svg></button>
  </div>
</header>

<div class="menubar">
  <i class="grip"></i>
  <svg class="bridge"><use href="#bridge"/></svg>
  <nav>
    <a href="#"><u>A</u>rchivo</a><a href="#"><u>E</u>dición</a><a href="#"><u>V</u>er</a><a href="#"><u>I</u>nsertar</a><a href="#"><u>C</u>álculo</a><a href="#"><u>R</u>esultados</a><a href="#"><u>H</u>erramientas</a><a href="#"><u>T</u>abla</a><a href="#"><u>O</u>pciones</a><a href="#"><u>M</u>ódulos adicionales</a><a href="#">Ve<u>n</u>tana</a><a href="#">A<u>y</u>uda</a>
  </nav>
  <div class="mdibtns">
    <button aria-label="Minimizar modelo"><svg viewBox="0 0 9 9"><path d="M1 8h7"/></svg></button>
    <button aria-label="Restaurar modelo"><svg viewBox="0 0 9 9"><path d="M2 1h7v5H7M1 4h6v4H1z"/></svg></button>
    <button aria-label="Cerrar modelo"><svg viewBox="0 0 9 9"><path d="M1 1l7 7M8 1L1 8"/></svg></button>
  </div>
</div>

<div class="toolrow">
  <div class="strip"><i class="grip"></i>
    <button class="tb" aria-label="Nuevo"><svg><use href="#new"/></svg></button><button class="tb" aria-label="Abrir"><svg><use href="#open"/></svg></button><button class="tb" aria-label="Administrador"><svg><use href="#cab-o"/></svg></button><button class="tb" aria-label="Bloques"><svg><use href="#cab-b"/></svg></button><button class="tb" aria-label="Guardar"><svg><use href="#save"/></svg></button><button class="tb" aria-label="Portapapeles"><svg><use href="#clip"/></svg></button><button class="tb" aria-label="Imprimir"><svg><use href="#print"/></svg></button><button class="tb" aria-label="Vista previa"><svg><use href="#preview"/></svg></button>
    <i class="sep"></i>
    <button class="tb" aria-label="Deshacer"><svg><use href="#undo"/></svg></button><button class="tb" aria-label="Rehacer"><svg><use href="#redo"/></svg></button>
    <i class="sep"></i>
    <button class="tb" aria-label="Selección rombo"><svg><use href="#sel-r"/></svg></button><button class="tb" aria-label="Selección elipse"><svg><use href="#sel-e"/></svg></button><button class="tb" aria-label="Selección anillo"><svg><use href="#sel-c"/></svg></button><button class="tb" aria-label="Agregar selección"><svg><use href="#sel-pm"/></svg></button><button class="tb" aria-label="Selección especial"><svg><use href="#sel-w"/></svg></button>
    <i class="sep"></i>
    <button class="tb" aria-label="Navegador"><svg><use href="#list"/></svg></button><button class="tb" aria-label="Tablas"><svg><use href="#grid"/></svg></button>
    <i class="sep"></i>
    <button class="tb" aria-label="Nuevo caso"><svg><use href="#newload"/></svg></button>
    <select class="loadcase" aria-label="Caso de carga"><option>CC1 - Peso propio</option></select>
    <button class="tb" aria-label="Anterior"><svg><use href="#prev"/></svg></button><button class="tb" aria-label="Siguiente"><svg><use href="#next"/></svg></button><button class="tb" aria-label="Ver cargas"><svg><use href="#eye1"/></svg></button><button class="tb" aria-label="Valores de carga"><svg><use href="#xxx1"/></svg></button><button class="tb" aria-label="Ver resultados"><svg><use href="#eye2"/></svg></button><button class="tb" aria-label="Valores"><svg><use href="#xxx2"/></svg></button>
    <i class="sep"></i>
    <button class="tb" aria-label="Gafas"><svg><use href="#glasses"/></svg></button><button class="tb" aria-label="Cálculo"><svg><use href="#abacus-w"/></svg></button><button class="tb" aria-label="Calcular todo"><svg><use href="#abacus"/></svg></button>
  </div>
  <div class="strip"><i class="grip"></i>
    <button class="tb" aria-label="Rejilla"><svg><use href="#handgrid"/></svg></button><button class="tb" aria-label="Ajustar"><svg><use href="#snap"/></svg></button><button class="tb" aria-label="Plano XY"><svg><use href="#pl1"/></svg></button><button class="tb on" aria-label="Plano YZ"><svg><use href="#pl2"/></svg></button><button class="tb" aria-label="Plano XZ"><svg><use href="#pl3"/></svg></button><button class="tb" aria-label="Plano de trabajo"><svg><use href="#persp"/></svg></button><button class="tb" aria-label="Ajustes"><svg><use href="#wrench"/></svg></button>
    <i class="sep"></i>
    <button class="tb" aria-label="Mover"><svg><use href="#move"/></svg></button><button class="tb" aria-label="Girar"><svg><use href="#rotate"/></svg></button><button class="tb" aria-label="Simetría"><svg><use href="#mirror"/></svg></button><button class="tb" aria-label="Conectar"><svg><use href="#cross"/></svg></button><button class="tb" aria-label="Información"><svg><use href="#info"/></svg></button><button class="tb" aria-label="Opciones"><svg><use href="#gearbox"/></svg></button><button class="tb" aria-label="Engranajes"><svg><use href="#gears"/></svg></button>
  </div>
  <div class="strip"><i class="grip"></i>
    <button class="tb" aria-label="Importar"><svg><use href="#m1"/></svg></button><button class="tb" aria-label="Exportar"><svg><use href="#m2"/></svg></button><button class="tb" aria-label="Importar tabla"><svg><use href="#m3"/></svg></button><button class="tb" aria-label="Exportar tabla"><svg><use href="#m4"/></svg></button>
  </div>
</div>

<div class="toolrow">
  <div class="strip"><i class="grip"></i>
    <button class="tb" aria-label="Nudo"><svg><use href="#node-n"/></svg></button><button class="dd" aria-label="Más nudos"></button><button class="tb" aria-label="Línea"><svg><use href="#line-n"/></svg></button><button class="tb" aria-label="Barra"><svg><use href="#member-n"/></svg></button><button class="dd" aria-label="Más barras"></button><button class="tb" aria-label="Polilínea"><svg><use href="#poly-n"/></svg></button><button class="dd" aria-label="Más líneas"></button>
    <i class="sep"></i>
    <button class="tb" aria-label="Apoyo en nudo"><svg><use href="#sup-n"/></svg></button><button class="tb" aria-label="Apoyo en línea"><svg><use href="#sups-n"/></svg></button><button class="tb" aria-label="Apoyo en superficie"><svg><use href="#surfsup-n"/></svg></button>
    <i class="sep"></i>
    <button class="tb" aria-label="Cota"><svg><use href="#dim-n"/></svg></button><button class="dd" aria-label="Más cotas"></button><button class="tb" aria-label="Comentario"><svg><use href="#note-n"/></svg></button><button class="tb" aria-label="Línea guía"><svg><use href="#guide-n"/></svg></button>
    <i class="sep"></i>
    <button class="tb" aria-label="Superficie"><svg><use href="#surf-n"/></svg></button><button class="dd" aria-label="Más superficies"></button><button class="tb" aria-label="Hueco"><svg><use href="#opening-n"/></svg></button><button class="dd" aria-label="Más huecos"></button><button class="tb" aria-label="Intersección"><svg><use href="#fold"/></svg></button><button class="dd" aria-label="Más intersecciones"></button><button class="tb" aria-label="Sólido"><svg><use href="#solid"/></svg></button><button class="tb" aria-label="Extruir"><svg><use href="#extr-n"/></svg></button><button class="dd" aria-label="Más sólidos"></button>
    <i class="sep"></i>
    <button class="tb" aria-label="Combinaciones"><svg><use href="#tree"/></svg></button><button class="dd" aria-label="Más combinaciones"></button><button class="tb" aria-label="Carga en nudo"><svg><use href="#nload"/></svg></button><button class="tb" aria-label="Carga en barra"><svg><use href="#lload"/></svg></button><button class="tb" aria-label="Carga en línea"><svg><use href="#lload"/></svg></button><button class="tb" aria-label="Carga en superficie"><svg><use href="#sload"/></svg></button><button class="tb" aria-label="Carga en sólido"><svg><use href="#vload"/></svg></button><button class="dd" aria-label="Más cargas"></button>
  </div>
  <div class="strip"><i class="grip"></i>
    <button class="tb" aria-label="Mover vista"><svg><use href="#hand"/></svg></button><button class="tb" aria-label="Zoom ventana"><svg><use href="#zoomr"/></svg></button><button class="tb" aria-label="Zoom anterior"><svg><use href="#zoomx"/></svg></button><button class="tb" aria-label="Isométrica"><svg><use href="#cube"/></svg></button><button class="tb" aria-label="Vistas"><svg><use href="#cubes"/></svg></button>
    <i class="sep"></i>
    <button class="tb" aria-label="Vista X"><svg><use href="#vx"/></svg></button><button class="tb" aria-label="Vista Y"><svg><use href="#vy"/></svg></button><button class="tb" aria-label="Vista Z"><svg><use href="#vz"/></svg></button><button class="tb" aria-label="Vista -X"><svg><use href="#vmx"/></svg></button><button class="dd" aria-label="Más vistas"></button><button class="tb" aria-label="Visibilidad"><svg><use href="#scope"/></svg></button><button class="dd" aria-label="Más visibilidad"></button>
    <i class="sep"></i>
    <button class="tb" aria-label="Representación"><svg><use href="#blue3d"/></svg></button><button class="dd" aria-label="Más representación"></button>
  </div>
  <div class="strip"><i class="grip"></i>
    <button class="tb" aria-label="Deformada"><svg><use href="#frame"/></svg></button><button class="tb" aria-label="Sección"><svg><use href="#cyl"/></svg></button>
    <i class="sep"></i>
    <button class="tb" aria-label="Esfuerzos"><svg><use href="#beam1"/></svg></button><button class="tb" aria-label="Isobandas"><svg><use href="#iso"/></svg></button><button class="tb" aria-label="Tensiones"><svg><use href="#isocube"/></svg></button><button class="tb" aria-label="Reacciones"><svg><use href="#reac"/></svg></button><button class="tb" aria-label="Flechas"><svg><use href="#defl"/></svg></button><button class="tb" aria-label="Paneles"><svg><use href="#tiles"/></svg></button><button class="dd" aria-label="Más paneles"></button><button class="tb" aria-label="Diagrama"><svg><use href="#beam2"/></svg></button><button class="tb" aria-label="Tabla de resultados"><svg><use href="#table2"/></svg></button>
    <i class="sep"></i>
    <button class="tb" aria-label="Informe"><svg><use href="#report"/></svg></button><button class="tb" aria-label="Herramientas"><svg><use href="#tools-n"/></svg></button><button class="dd" aria-label="Más herramientas"></button><button class="tb" aria-label="Colores"><svg><use href="#rainbow"/></svg></button><button class="dd" aria-label="Más colores"></button>
  </div>
</div>

<main class="canvas">
  <svg class="axes" viewBox="0 0 76 60"><use href="#triad"/><text x="19" y="7" fill="#0000e0">Z</text><text x="69" y="52" fill="#f00000">X</text><text x="9" y="40" fill="#00d000">Y</text></svg>

  <svg class="vessel" viewBox="0 0 1560 3000">
    <!-- shell, shoulders and dome -->
    <path d="M38 462C40 400 60 350 130 290C200 215 330 180 480 155C680 115 880 115 1060 150C1240 180 1370 240 1450 300C1490 350 1504 410 1506 462V1960C1500 2010 1490 2050 1460 2080C1420 2120 1370 2150 1335 2168C1200 2250 900 2278 772 2278C600 2278 380 2230 233 2180C150 2140 90 2090 60 2050C44 2010 38 1990 38 1960Z" fill="#6a6afa"/>
    <path d="M613 580L630 507Q1100 520 1250 460Q1425 410 1420 320L1460 320Q1500 370 1506 470V560Q1200 660 772 663H613Z" fill="#7676fc"/>
    <path d="M613 580L710 567L830 612L700 660H613Z" fill="#8585fb"/>
    <ellipse cx="772" cy="330" rx="648" ry="180" fill="#5555e0"/>
    <path d="M772 182Q700 300 630 507Q1000 520 1180 470Q1420 420 1420 330Q1400 200 960 180Z" fill="#6060f0"/>
    <path d="M124 325Q130 400 300 450L560 470L690 320L772 182L960 178Q860 128 720 128Q300 150 124 325Z" fill="#5050dc" opacity=".6"/>
    <path d="M38 462V1960A734 204 0 0 0 1506 1960V462A734 201 0 0 1 38 462Z" fill="url(#g-shell)"/>
    <path d="M233 2180Q500 2260 772 2262Q1000 2262 1230 2212L1160 2232Q950 2278 772 2278Q450 2274 233 2180Z" fill="#4a4ad4"/>
    <path d="M233 2180Q420 2215 620 2218Q1000 2222 1230 2208Q1000 2258 772 2262Q500 2260 233 2180Z" fill="#5858ea"/>
    <path d="M38 470V1960M1506 470V1960" stroke="#8080e8" stroke-width="5" stroke-dasharray="3 3"/>

    <!-- dome mesh -->
    <g fill="none" stroke="#b4b4bc" stroke-width="2.400" stroke-dasharray="5 4" opacity=".8">
      <g clip-path="url(#c-dome)">
        <ellipse cx="772" cy="330" rx="590" ry="162"/><ellipse cx="772" cy="328" rx="530" ry="144"/><ellipse cx="772" cy="326" rx="470" ry="126"/><ellipse cx="772" cy="324" rx="410" ry="108"/><ellipse cx="772" cy="322" rx="350" ry="92"/><ellipse cx="772" cy="320" rx="290" ry="76"/><ellipse cx="772" cy="318" rx="230" ry="60"/><ellipse cx="772" cy="316" rx="170" ry="44"/><ellipse cx="772" cy="314" rx="100" ry="26"/>
        <path d="M700 312L124 325M700 312L150 390M700 312L220 430M700 312L300 460M700 312L400 480M700 312L500 500M700 312L560 505M700 312L130 270M700 312L200 220M700 312L290 190M700 312L400 170M700 312L520 150M700 312L620 150M700 312L720 150M700 312L840 150M700 312L720 515M700 312L800 515M700 312L900 515M700 312L1000 505M700 312L1100 490M700 312L1200 470M700 312L960 160M472 300L360 180M472 300L300 400M472 300L420 500M472 300L560 480M472 300L640 440M472 300L600 180"/>
      </g>
      <path d="M50 415A724 200 0 0 0 1494 415M75 370A700 198 0 0 0 1470 370"/>
      <path d="M150 383L72 520M195 420L130 570M250 445L190 600M320 462L290 625M400 480L360 640M480 495L440 655M560 503L524 660M700 508L700 660M790 508L782 663M880 506L866 663M960 502L950 660M1040 494L1034 654M1120 480L1112 645M1180 520L1184 632M1250 525L1250 615M1320 510L1313 598M1380 440L1368 580M1410 360L1450 535M124 325L60 400M130 290L45 420M560 505L700 660L830 600M630 560L790 590M860 520L940 580M1000 500L1060 570"/>
      <path d="M38 500L60 520L124 600L170 590L226 690L292 632L364 790L441 655M45 640L86 620L124 780L226 770L292 860L364 860L441 860M697 663L782 830L866 745L950 905L1034 750L1112 890L1184 720L1250 860L1313 700L1368 840L1415 690L1450 800L1490 600M124 870L226 790L226 840L345 670M292 850L441 720M866 830L950 700L1034 820L1060 660M1112 880L1184 800L1250 690L1313 800L1415 640M1034 970L1112 890M60 900L170 800M170 880L292 780M226 890L364 800M292 900L430 800"/>
    </g>
    <ellipse cx="470" cy="310" rx="170" ry="105" fill="url(#p-fine)" opacity=".6"/>
    <path d="M620 130Q800 118 960 148Q900 230 880 340Q900 420 1080 490Q1250 545 1340 510Q1480 500 1500 440Q1480 340 1400 260L1340 230Q1500 380 1390 560Q1200 560 940 560Q830 440 800 300Q760 200 620 150Z" fill="url(#p-fine)" opacity=".6"/>
    <path d="M300 190Q520 120 780 128Q900 130 980 150L900 175L772 180L520 155Z" fill="url(#p-fine)" opacity=".6"/>

    <!-- shell mesh -->
    <g clip-path="url(#c-shell)" fill="none" stroke="#acacc0" stroke-width="2.400" stroke-dasharray="6 4" opacity=".85">
      <path d="M45 400V2200M60 400V2200M86 400V2200M124 400V2200M170 400V2200M226 400V2200M292 400V2200M364 400V2200M441 400V2200M524 400V2200M697 400V2200M782 400V2200M866 400V2200M950 400V2200M1034 400V2200M1112 400V2200M1184 400V2200M1250 400V2200M1313 400V2200M1368 400V2200M1415 400V2200M1450 400V2200M1480 400V2200M1496 400V2200"/>
      <path id="ring" d="M38 536A735 210 0 0 0 1506 536"/>
      <use href="#ring" y="83"/><use href="#ring" y="166"/><use href="#ring" y="249"/><use href="#ring" y="332"/><use href="#ring" y="415"/><use href="#ring" y="498"/><use href="#ring" y="580"/><use href="#ring" y="663"/><use href="#ring" y="746"/><use href="#ring" y="829"/><use href="#ring" y="912"/><use href="#ring" y="994"/><use href="#ring" y="1077"/><use href="#ring" y="1160"/><use href="#ring" y="1243"/><use href="#ring" y="1326"/>
      <path d="M86 1920L170 1820M124 1980L226 1840M170 2010L292 1870M226 2030L364 1950M292 2060L370 1960M60 1860L200 2000"/>
    </g>
    <path d="M60 2050Q200 2170 450 2220Q772 2262 1100 2220Q1350 2170 1460 2080M705 2150L740 2240M782 2150L810 2250M866 2155L900 2245M950 2150L1000 2235M1034 2150L1060 2225M1112 2140L1150 2215M524 2150L560 2240M441 2140L480 2225M364 2130L400 2210M292 2100L330 2190M697 2190L866 2100L1034 2200L1184 2080" fill="none" stroke="#a4a4c0" stroke-width="2" stroke-dasharray="5 4" opacity=".7"/>

    <!-- structural lines -->
    <g fill="none" stroke="#101028" stroke-width="3.200">
      <path d="M38 440Q38 505 69 521Q240 663 772 663Q1200 660 1410 560Q1506 510 1506 465"/>
      <path d="M38 1955Q45 2000 69 2010Q240 2153 772 2153Q1200 2145 1410 2050Q1500 2010 1506 1955"/>
      <path d="M480 160Q300 190 200 245Q60 320 150 383Q250 445 420 480Q600 510 772 508Q950 508 1080 490M480 158Q620 150 772 182Q860 176 940 180M1370 262Q1430 300 1420 335Q1410 360 1398 376"/>
      <path d="M772 182Q720 245 700 312Q640 460 630 507L617 577L613 660V2150L617 2218L630 2256L698 2280"/>
      <path d="M233 2180Q450 2250 630 2258Q900 2265 1160 2224L1220 2212"/>
    </g>

    <!-- lifting lugs and manhole -->
    <use href="#node" x="472" y="245"/><use href="#node" x="452" y="276"/><use href="#node" x="494" y="264"/><use href="#node" x="1071" y="64"/><use href="#node" x="1049" y="93"/><use href="#node" x="1092" y="82"/>
    <path d="M443 360L455 280Q472 225 490 265L500 325L470 345Z" fill="#f00"/><path d="M440 362L437 425L508 405L500 328" fill="none" stroke="#f02040" stroke-width="3" stroke-dasharray="12 5"/>
    <ellipse cx="470" cy="277" rx="9" ry="13" fill="#777700" stroke="#300" stroke-width="2"/>
    <path d="M1047 130L1055 90Q1072 50 1088 82L1100 130Z" fill="#f00"/><ellipse cx="1071" cy="93" rx="9" ry="14" fill="#777700" stroke="#300" stroke-width="2"/>
    <path d="M870 315Q878 270 935 175Q970 128 1070 128Q1180 130 1300 218Q1400 290 1398 375Q1396 440 1340 500Q1310 528 1240 525Q1100 515 970 450Q880 400 870 315Z" fill="#f00000"/>
    <path d="M870 315Q880 390 935 430Q1100 515 1240 525Q1310 528 1340 500L1370 450Q1320 478 1250 474Q1130 460 1020 380Q960 330 922 250L935 175Q878 270 870 315Z" fill="#e20000"/>
    <path d="M922 250Q1000 230 1080 236Q1200 255 1290 305Q1370 370 1375 435Q1350 475 1250 474Q1130 460 1020 380Q950 325 922 250Z" fill="#9400c8"/>
    <path d="M922 250Q1000 230 1080 236Q1200 255 1290 305Q1370 370 1375 435Q1350 475 1250 474Q1130 460 1020 380Q950 325 922 250Z" fill="url(#p-pink)"/>
    <path d="M922 250Q950 325 1020 380Q1130 460 1250 474Q1350 475 1375 435" fill="none" stroke="#300010" stroke-width="4"/>

    <!-- legs -->
    <g transform="translate(0 1890)">
      <path d="M68 165L95 187L165 255L233 290L182 900L95 908L68 885Z" fill="#7a7af6"/><path d="M68 165L95 187V908L68 885Z" fill="#6c6ce8"/>
      <path d="M862 386L975 378V640L952 665L865 660Z" fill="#7878f0"/><path d="M886 384H950V640H886Z" fill="#6464e6"/>
      <path d="M1153 343L1220 322L1275 255L1335 237V963L1275 985L1207 965Z" fill="#7c7cf8"/><path d="M1168 340L1220 322L1275 255V985L1207 965Z" fill="#6262e4"/><path d="M1153 343L1168 340L1210 965H1200Z" fill="#6a6aff"/>
      <path d="M68 165L95 187L165 255L233 290L182 900L95 908L68 885ZM862 386L975 378V640L952 665L865 660ZM1168 340L1220 322L1275 255L1335 237V963L1275 985L1207 965Z" fill="url(#p-mesh)" opacity=".6"/>
      <path d="M885 640H955L952 663L868 660Z" fill="#9400b8"/><path d="M885 640H955L952 663L868 660Z" fill="url(#p-pink)"/>
      <g fill="none" stroke="#101028" stroke-width="3.600"><path d="M68 165V885L95 908L182 900L233 290M95 187V908M862 386L865 660H952L975 640V378M886 384V636M950 380L953 663M1168 340L1207 965L1275 985L1335 963V237M1275 255V985M886 638H955"/></g>
      <path d="M1276 -505V255M1335 200V237" stroke="#40408c" stroke-width="3"/>
      <path d="M95 187L165 255M1220 322L1275 255L1335 237" stroke="#111" stroke-width="4" stroke-dasharray="4 8" fill="none"/>
      <use href="#support" x="124" y="911"/><use href="#support" x="919" y="669"/><use href="#support" x="1272" y="982"/>
      <g transform="translate(714 702) scale(2.600)"><use href="#triad"/><circle cx="22" cy="51" r="4" fill="#900"/></g>
    </g>

    <!-- nodes -->
    <use href="#mid" x="438" y="366"/><use href="#mid" x="503" y="319"/><use href="#mid" x="932" y="272"/><use href="#mid" x="1391" y="326"/><use href="#mid" x="1076" y="490"/><use href="#mid" x="64" y="2048"/><use href="#mid" x="91" y="2072"/><use href="#mid" x="165" y="2146"/><use href="#mid" x="1275" y="2144"/><use href="#mid" x="1338" y="2127"/><use href="#mid" x="1220" y="2212"/><use href="#mid" x="1167" y="2230"/>
    <use href="#node" x="293" y="202"/><use href="#node" x="525" y="155"/><use href="#node" x="772" y="183"/><use href="#node" x="700" y="312"/><use href="#node" x="150" y="383"/><use href="#node" x="69" y="521"/><use href="#node" x="630" y="507"/><use href="#node" x="617" y="577"/><use href="#node" x="612" y="660"/><use href="#node" x="1313" y="599"/><use href="#node" x="1158" y="301"/><use href="#node" x="1392" y="271"/><use href="#node" x="1452" y="320"/>
    <use href="#node" x="68" y="2009"/><use href="#node" x="612" y="2148"/><use href="#node" x="617" y="2218"/><use href="#node" x="630" y="2256"/><use href="#node" x="698" y="2276"/><use href="#node" x="1314" y="2086"/>
    <use href="#node" x="66" y="2775"/><use href="#node" x="95" y="2799"/><use href="#node" x="180" y="2792"/><use href="#node" x="889" y="2524"/><use href="#node" x="975" y="2532"/><use href="#node" x="866" y="2550"/><use href="#node" x="954" y="2556"/><use href="#node" x="921" y="2540"/><use href="#node" x="1210" y="2855"/><use href="#node" x="1275" y="2873"/><use href="#node" x="1334" y="2854"/>
    <path d="M55 1287l9-11v20zM83 1312l9-12v24zM1275 1371q-10 14-5 24 18-2 16-15-3-10-11-9zM1336 1353q-6 16-3 26 15-4 14-16-3-10-11-10z" fill="#900"/>
    <g class="triad-names"><text x="765" y="2619" fill="#0000e0">Z</text><text x="879" y="2726" fill="#f00000">X</text><text x="728" y="2702" fill="#00d000">Y</text></g>
  </svg>

  <form class="dialog" role="dialog" aria-label="Selección especial">
    <div class="dlg-title"><h2>Selección especial</h2><button type="button" aria-label="Cerrar"><svg viewBox="0 0 10 10"><path d="M0 0l10 10M10 0L0 10"/></svg></button></div>
    <div class="tabs"><button type="button" class="tab active">Datos del modelo</button><button type="button" class="tab">Cargas</button></div>
    <div class="panel">
      <div class="left">
        <section class="group cat">
          <h3>Categoría</h3>
          <table>
            <thead><tr><th class="c1">Activar</th><th>Categoría</th><th class="c3">Todo</th></tr></thead>
            <tbody>
              <tr><td><input type="checkbox" aria-label="Activar nudos"></td><th>Nudos</th><td><input type="checkbox" aria-label="Todos los nudos"></td></tr>
              <tr><td><input type="checkbox" aria-label="Activar líneas"></td><th>Líneas</th><td><input type="checkbox" aria-label="Todas las líneas"></td></tr>
              <tr><td><input type="checkbox" aria-label="Activar materiales"></td><th>Materiales</th><td class="off"><input type="checkbox" disabled aria-label="Todos los materiales"></td></tr>
              <tr><td><input type="checkbox" checked aria-label="Activar superficies"></td><th class="current">Superficies</th><td><input type="checkbox" aria-label="Todas las superficies"></td></tr>
              <tr><td><input type="checkbox" aria-label="Activar huecos"></td><th>Huecos</th><td><input type="checkbox" aria-label="Todos los huecos"></td></tr>
              <tr><td><input type="checkbox" aria-label="Activar apoyos en nudos"></td><th>Apoyos en nudos</th><td><input type="checkbox" aria-label="Todos los apoyos"></td></tr>
              <tr><td><input type="checkbox" aria-label="Activar secciones"></td><th>Secciones</th><td><input type="checkbox" aria-label="Todas las secciones"></td></tr>
              <tr><td><input type="checkbox" aria-label="Activar barras"></td><th>Barras</th><td><input type="checkbox" aria-label="Todas las barras"></td></tr>
              <tr><td><input type="checkbox" aria-label="Activar intersecciones"></td><th>Intersecciones</th><td><input type="checkbox" aria-label="Todas las intersecciones"></td></tr>
              <tr><td><input type="checkbox" aria-label="Activar refinamientos"></td><th>Refinamientos de malla de EF</th><td><input type="checkbox" aria-label="Todos los refinamientos"></td></tr>
              <tr class="rest"><td></td><td></td><td></td></tr>
            </tbody>
          </table>
          <div class="iconrow"><button type="button" class="ib" aria-label="Activar todo"><svg><use href="#chk-all"/></svg></button><button type="button" class="ib" aria-label="Desactivar todo"><svg><use href="#chk-none"/></svg></button><button type="button" class="ib" aria-label="Invertir"><svg><use href="#chk-inv"/></svg></button></div>
        </section>
        <section class="group state">
          <h3>Estado</h3>
          <div class="radios">
            <label><input type="radio" name="modo" checked><span><u>A</u>gregar</span></label><label><input type="radio" name="op" checked><span><u>O</u></span></label>
            <label><input type="radio" name="modo"><span>Seleccionar de la <u>s</u>elección actual</span></label><label><input type="radio" name="op"><span><u>Y</u></span></label>
            <label><input type="radio" name="modo"><span><u>Q</u>uitar de la selección actual</span></label>
          </div>
        </section>
      </div>
      <section class="group surfaces">
        <h3>Superficies</h3>
        <div class="scroller">
          <div class="filters">
            <div class="filter"><label><input type="checkbox"><span>Con <u>n</u>úmero:</span></label><div class="row"><input class="field" type="text" disabled aria-label="Número"></div></div>
            <div class="filter"><label><input type="checkbox"><span>Con <u>g</u>eometría:</span></label><div class="row"><select disabled aria-label="Geometría"><option>Plana</option></select><button type="button" class="ib" disabled aria-label="Elegir geometría"><svg><use href="#pick"/></svg></button></div></div>
            <div class="filter"><label><input type="checkbox"><span>Con <u>m</u>aterial:</span></label><div class="row"><select class="blank" disabled aria-label="Material"><option></option></select><button type="button" class="ib" disabled aria-label="Elegir material"><svg><use href="#pick"/></svg></button></div></div>
            <div class="filter"><label><input type="checkbox"><span>Con rigide<u>z</u>:</span></label><div class="row"><select disabled aria-label="Rigidez"><option>Estándar</option></select><button type="button" class="ib" disabled aria-label="Elegir rigidez"><svg><use href="#pick"/></svg></button></div></div>
            <div class="filter"><label><input type="checkbox"><span>Con es<u>p</u>esor</span></label><div class="row"><select disabled aria-label="Tipo de espesor"><option>Constante</option></select><button type="button" class="ib" disabled aria-label="Elegir espesor"><svg><use href="#pick"/></svg></button></div></div>
            <div class="filter range"><label><input type="checkbox" checked><span>Con es<u>p</u>esor</span></label>
              <div class="limits"><label for="t-min">de:</label><div class="spin"><input id="t-min" type="text" value="7.9"><span class="ud"><button type="button" class="up" aria-label="Aumentar"></button><button type="button" class="down" aria-label="Reducir"></button></span><button type="button" class="more" aria-label="Más"></button></div><label class="to" for="t-max">a:</label><div class="spin"><input id="t-max" type="text" value="20.3"><span class="ud"><button type="button" class="up" aria-label="Aumentar"></button><button type="button" class="down" aria-label="Reducir"></button></span><button type="button" class="more" aria-label="Más"></button></div><span>[mm]</span></div></div>
            <div class="filter"><label><input type="checkbox"><span>C<u>o</u>n comentario:</span></label><div class="row two"><select disabled aria-label="Comentario"><option>Todo</option></select><button type="button" class="ib" disabled aria-label="Biblioteca"><svg><use href="#handbook"/></svg></button><button type="button" class="ib" disabled aria-label="Elegir comentario"><svg><use href="#pick"/></svg></button></div></div>
            <div class="filter last"><label><input type="checkbox"><span>Con apoyo:</span></label><div class="row"><select disabled aria-label="Apoyo"><option>Todo</option></select><button type="button" class="ib" disabled aria-label="Elegir apoyo"><svg><use href="#pick"/></svg></button></div></div>
          </div>
          <div class="scrollbar"><button type="button" aria-label="Subir"><svg viewBox="0 0 8 6"><path d="M1 5l3-3 3 3"/></svg></button><i class="thumb"></i><button type="button" aria-label="Bajar"><svg viewBox="0 0 8 6"><path d="M1 1l3 3 3-3"/></svg></button></div>
        </div>
      </section>
    </div>
    <div class="actions">
      <button type="button" class="ib" aria-label="Ayuda"><svg><use href="#help"/></svg></button>
      <button type="button" class="ib gap" aria-label="Comentarios"><svg><use href="#edit"/></svg></button>
      <button type="button" class="ib" aria-label="Unidades"><svg><use href="#units"/></svg></button>
      <button type="button" class="btn ok">Aceptar</button><button type="button" class="btn">Cancelar</button>
    </div>
    <svg class="resize" viewBox="0 0 12 12"><path d="M0 12L12 0M4 12l8-8M8 12l4-4"/></svg>
  </form>
</main>

<footer class="status">
  <button class="down">FORZC</button><button>REJILLA</button><button class="down">CARTES</button><button class="down">REFENT</button><button class="down">GLN</button><button class="down">DXF</button>
  <div class="cells"><i></i><i></i><i></i><i></i></div>
</footer>
</body>
</html>
```
FILE: styles.css
```css
* { box-sizing: border-box; }
body {
  margin: 0;
  min-height: 100vh;
  display: flex;
  flex-direction: column;
  background: #d0d4dd;
  font: 11px/16px "Open Sans", "Noto Sans", sans-serif;
  color: #000;
}
button, input, select { font: inherit; color: inherit; margin: 0; }
button { padding: 0; border: 0; background: none; }
h1, h2, h3 { margin: 0; font-size: inherit; font-weight: normal; }
u { text-underline-offset: 2px; }
.defs { position: absolute; width: 0; height: 0; }
.defs text { font-family: "Liberation Serif", serif; }

/* title and menu */
.titlebar { display: flex; align-items: center; height: 23px; padding-left: 2px; background: #fff; color: #888; }
.i16 { width: 16px; height: 16px; }
.titlebar h1 { margin-left: 5px; }
.winbtns { display: flex; margin-left: auto; padding-right: 2px; }
.winbtns button { width: 46px; height: 22px; display: grid; place-items: center; }
.winbtns svg, .dlg-title svg { width: 10px; height: 10px; fill: none; stroke: #888; }
.menubar { display: flex; align-items: center; height: 24px; padding-left: 4px; color: #3c4048; }
.bridge { width: 16px; height: 12px; margin: 0 2px 0 4px; }
.menubar nav { display: flex; }
.menubar a { padding: 0 8px; color: inherit; text-decoration: none; }
.mdibtns { display: flex; margin-left: auto; padding-right: 1px; }
.mdibtns button { width: 16px; height: 16px; display: grid; place-items: center; }
.mdibtns svg { width: 9px; height: 9px; fill: none; stroke: #555; stroke-width: 1.5; }

/* toolbars */
.grip { width: 2px; height: 16px; flex: none; background: repeating-linear-gradient(#a2a7b2 0 2px, transparent 2px 4px); }
.toolrow { display: flex; gap: 1px; height: 26px; }
.strip {
  display: flex;
  align-items: center;
  height: 26px;
  padding: 1px 2px 0 4px;
  background: linear-gradient(#f0f3f9, #dde1ea);
  border-bottom: 1px solid #b8bcc6;
  border-radius: 3px;
}
.strip .grip { margin-right: 4px; }
.tb { width: 22px; height: 22px; display: grid; place-items: center; flex: none; }
.tb svg { width: 16px; height: 16px; overflow: visible; }
.tb.on { border: 1px solid #b09468; background: linear-gradient(#fac67c, #ffe8b4); }
.dd { width: 13px; height: 22px; flex: none; display: grid; place-items: center; }
.dd::after { content: ""; border: 3px solid transparent; border-top: 4px solid #70747c; border-bottom: 0; }
.sep { width: 8px; height: 16px; flex: none; background: linear-gradient(#b0b4be, #b0b4be) 3px 0 / 1px 100% no-repeat, linear-gradient(#fff, #fff) 4px 0 / 1px 100% no-repeat; }
.loadcase {
  appearance: none;
  width: 216px;
  height: 18px;
  margin: 0 2px;
  padding: 0 3px;
  border: 0;
  background: url("data:image/svg+xml,%3Csvg xmlns='http://www.w3.org/2000/svg' width='14' height='18'%3E%3Cpath d='M0 0h14v18H0z' fill='%23dfe2e8'/%3E%3Cpath d='M4 7h6l-3 4z' fill='%23777'/%3E%3C/svg%3E") right no-repeat #fff;
}

/* drawing area */
.canvas {
  position: relative;
  flex: 1;
  min-height: 1000px;
  margin-right: 1px;
  background: #fff;
  border: 1px solid #d8d8d8;
  border-top: 1px solid #6c6c6c;
  border-left: 2px solid #8c8c8c;
}
.vessel { position: absolute; right: 218px; top: 10px; width: 520px; height: 1000px; }
.axes { position: absolute; left: 33px; top: 840px; width: 76px; height: 60px; overflow: visible; }
.axes text { font: 9px "Liberation Mono", monospace; }
.triad-names { font: 27px "Liberation Mono", monospace; }

/* dialog */
.dialog {
  position: absolute;
  left: 212px;
  top: 115px;
  width: 804px;
  background: #f0f0f0;
  border: 1px solid #6a6a6a;
  box-shadow: 2px 4px 14px rgba(0, 0, 0, .4);
  font: 11px/14px Roboto, "Liberation Sans", sans-serif;
}
.dlg-title { display: flex; justify-content: space-between; align-items: center; height: 30px; padding: 0 10px 0 8px; background: #fff; }
.dlg-title h2 { font: 11px/16px "Open Sans", "Noto Sans", sans-serif; }
.dlg-title svg { stroke: #111; display: block; }
.tabs { display: flex; align-items: flex-end; height: 27px; padding-left: 6px; }
.tab { height: 18px; padding: 0 3px; border: 1px solid #dcdcdc; border-left: 0; border-bottom: 0; }
.tab.active { position: relative; height: 21px; margin-bottom: -1px; padding: 0 7px 1px; border-left: 1px solid #dcdcdc; background: #fff; }
.panel { display: flex; gap: 8px; margin: 0 8px 0 6px; padding: 9px 10px 10px 11px; background: #fff; border: 1px solid #dcdcdc; }
.left { display: flex; flex-direction: column; gap: 11px; width: 256px; }
.group { position: relative; background: #eff3f9; border-bottom: 1px solid #a8a4e8; }
.group::after { content: ""; position: absolute; top: 10px; right: 0; bottom: 0; border-right: 1px solid #a8a4e8; }
.group h3 { height: 16px; padding: 1px 2px; background: #dae5f5; color: #1c3f66; clip-path: polygon(0 0, calc(100% - 10px) 0, 100% 10px, 100% 100%, 0 100%); }
.surfaces { flex: 1; }

table { width: 254px; margin-top: 2px; border-collapse: collapse; table-layout: fixed; }
.c1 { width: 48px; }
.c3 { width: 48px; }
th, td { height: 16px; padding: 0; border: 1px solid #a0a0a0; font-weight: normal; line-height: 15px; background: #f0f0f0; text-align: center; }
th:last-child, td:last-child { border-right: 0; }
thead th { height: 17px; line-height: 16px; }
tbody th { text-align: left; padding-left: 4px; }
tbody td { background: #fff; }
tbody td.off { background: #f0f0f0; }
.current { outline: 1px solid #000; outline-offset: -1px; }
.rest td { height: 195px; background: #e9eeee; border-bottom: 0; }
td input { appearance: none; display: block; width: 12px; height: 12px; margin: 1px auto; border: 1px solid #000; border-right-width: 2px; border-bottom-width: 2px; background: #fff; }
td input:disabled { border: 1px solid #888; background: #f0f0f0; }
td input:checked::after { content: ""; display: block; width: 4px; height: 7px; margin: -1px 0 0 3px; border: solid #000; border-width: 0 2px 2px 0; transform: rotate(40deg); }

.ib { width: 25px; height: 21px; display: grid; place-items: center; border: 1px solid #adadad; background: #e2e2e2; flex: none; }
.ib svg { width: 16px; height: 16px; }
.ib:disabled { border-color: #bfbfbf; background: #ccc; }
.iconrow { display: flex; gap: 5px; padding: 5px 4px; }
.state { width: 255px; height: 91px; }
.radios { display: grid; grid-template-columns: 190px 1fr; grid-template-rows: 20px 26px 22px; align-items: center; padding: 0 6px; }
.radios label { display: flex; align-items: center; gap: 3px; }
input[type=radio] { appearance: none; width: 13px; height: 13px; border: 1px solid #333; border-radius: 50%; background: #fff; }
input[type=radio]:checked { background: radial-gradient(#222 0 3px, #fff 4px); }

.scroller { display: flex; height: 507px; padding: 1px 4px 5px 0; }
.filters { flex: 1; height: 506px; overflow: hidden; }
.filter { width: 480px; height: 55px; margin-bottom: 10px; padding: 4px 2px; border: 1px solid #a8a4e8; border-top-color: #dce6f5; border-left-color: #dce6f5; }
.filter.range { height: 57px; }
.filter > label { display: flex; align-items: center; gap: 3px; height: 14px; }
.filter > label input { appearance: none; width: 13px; height: 13px; border: 1px solid #222; background: #fff; }
.filter > label input:checked::after { content: ""; display: block; width: 4px; height: 8px; margin: 0 0 0 4px; border: solid #333; border-width: 0 1px 1px 0; transform: rotate(40deg); }
.row { display: flex; gap: 5px; margin-top: 7px; }
.field, .row select { width: 438px; height: 21px; border: 1px solid #ccc; }
.field { background: #f0f0f0; outline: 1px solid #fff; outline-offset: -2px; }
.row select {
  appearance: none;
  padding: 0 3px;
  color: #777;
  opacity: 1;
  background: url("data:image/svg+xml,%3Csvg xmlns='http://www.w3.org/2000/svg' width='16' height='8'%3E%3Cpath d='M4 2l4 4 4-4' fill='none' stroke='%23999'/%3E%3C/svg%3E") right center no-repeat #ccc;
  border-color: #bfbfbf;
}
.row select.blank { background-color: #fff; box-shadow: inset 0 0 0 2px #fff, inset 418px 0 #f0f0f0; }
.row.two select { width: 410px; }
.row.two { gap: 3px; }
.row.two select { margin-right: 2px; }
.limits { display: flex; align-items: center; height: 20px; margin-top: 7px; padding-left: 12px; }
.limits > span { margin-left: 7px; }
.limits label { width: 27px; }
.limits .to { width: 16px; margin-left: 48px; }
.spin { display: flex; width: 83px; height: 20px; padding: 1px; border: 1px solid #7a9cc0; background: #fff; }
.spin input { flex: 1; min-width: 0; padding: 0 5px 0 0; border: 0; text-align: right; }
.ud { display: flex; flex-direction: column; width: 12px; gap: 1px; margin-right: 2px; }
.spin button { border: 1px solid #b4b4b4; background: #f0f0f0; display: grid; place-items: center; }
.ud button { flex: 1; min-height: 0; }
.more { width: 9px; }
.spin button::after { content: ""; border: 3px solid transparent; }
.spin .up::after { border-bottom-color: #000; border-top: 0; }
.spin .down::after { border-top-color: #000; border-bottom: 0; }
.spin .more::after { border-left-color: #000; border-right: 0; }
.scrollbar { display: flex; flex-direction: column; width: 15px; height: 501px; background: #f0f0f0; }
.scrollbar button { height: 17px; display: grid; place-items: center; }
.scrollbar svg { width: 8px; height: 6px; fill: none; stroke: #444; stroke-width: 2; }
.thumb { height: 202px; margin-bottom: auto; background: #cdcdcd; }

.actions { display: flex; align-items: center; gap: 5px; padding: 10px 7px 7px; }
.actions .gap { margin-left: 5px; }
.btn { width: 73px; height: 21px; border: 1px solid #adadad; background: #e2e2e2; }
.btn.ok { margin: 0 5px 0 auto; border: 2px solid #0078d7; }
.resize { position: absolute; right: 0; bottom: 0; width: 12px; height: 12px; fill: none; stroke: #999; }

/* status bar */
.status {
  display: flex;
  align-items: stretch;
  gap: 2px;
  height: 21px;
  padding: 1px 0 1px 1170px;
  background: linear-gradient(#d8dbe0, #a9b0b9 60%, #bcc0c6);
  border-top: 1px solid #a0a0a0;
  font: 11px/14px Roboto, sans-serif;
  color: #222;
}
.status button { padding: 0 3px; border: 1px solid #fff; border-right-color: #888; border-bottom-color: #888; }
.status button.down { border-color: #111 #fff #fff #111; }
.cells { display: flex; margin-left: auto; padding: 1px 0 0; }
.cells i { width: 87px; border-left: 1px solid #9298a2; }
.cells i:nth-child(n + 2) { width: 74px; }
```
